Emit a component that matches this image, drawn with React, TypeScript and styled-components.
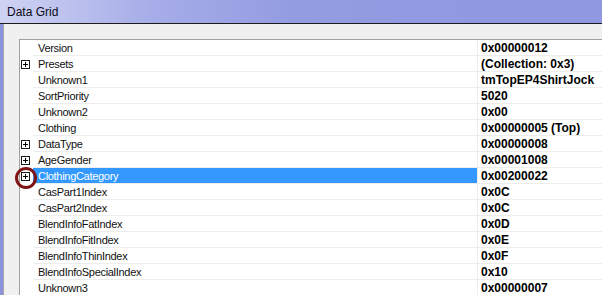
import React from 'react';
import styled, { createGlobalStyle } from 'styled-components';

const GlobalStyle = createGlobalStyle`
  html, body {
    margin: 0;
    padding: 0;
    background: #fff;
  }
  body {
    font-family: "Liberation Sans", Arial, sans-serif;
  }
`

const Window = styled.div`
  width: 602px;
  height: 295px;
  overflow: hidden;
  display: flex;
  flex-direction: column;
  background: #f0f0f0;
`

const TitleBar = styled.div`
  height: 23px;
  flex: none;
  display: flex;
  align-items: center;
  padding-left: 7px;
  font-size: 12px;
  color: #0c0c18;
  background: linear-gradient(to right, #cfd3f3 0%, #a6ade8 25%, #939be1 50%, #8f98e0 100%);
  border-bottom: 1px solid #1c1c1c;
`

const Body = styled.div`
  flex: 1;
  display: flex;
  min-height: 0;
`

const FrameEdge = styled.div`
  width: 3px;
  flex: none;
  background: #8a93dc;
`

const Panel = styled.div`
  flex: 1;
  display: flex;
  flex-direction: column;
  padding: 15px 0 0 15px;
  border-left: 1px solid #a3a3a3;
  background: #f0f0f0;
  min-height: 0;
`

const Grid = styled.div`
  flex: 1;
  background: #fff;
  border-top: 1px solid #a0a0a0;
  border-left: 1px solid #a0a0a0;
  display: flex;
  flex-direction: column;
`

const Row = styled.div`
  display: grid;
  grid-template-columns: 13px 445px 1fr;
  height: 16px;
  flex: none;
`

const Gutter = styled.div`
  position: relative;
  display: flex;
  align-items: center;
  padding-left: 1px;
`

const NameCell = styled.div<{ $selected?: boolean }>`
  display: flex;
  align-items: center;
  padding-left: 5px;
  border-bottom: 1px solid #ededed;
  border-right: 1px solid #ededed;
  background: ${p => (p.$selected ? '#3399ff' : '#fff')};
  color: ${p => (p.$selected ? '#fff' : '#111')};
  font-size: 11px;
  letter-spacing: -0.3px;
  white-space: nowrap;
`

const ValueCell = styled.div`
  display: flex;
  align-items: center;
  padding-left: 3px;
  border-bottom: 1px solid #ededed;
  color: #000;
  font-size: 12px;
  font-weight: bold;
  white-space: nowrap;
`

const Marker = styled.div`
  position: absolute;
  left: -5px;
  top: -1px;
  width: 22px;
  height: 22px;
  box-sizing: border-box;
  border: 3px solid #7e1414;
  border-radius: 50%;
`

const ExpandIcon = () => (
  <svg width="9" height="9" viewBox="0 0 9 9" style={{ display: 'block' }}>
    <rect x="0.5" y="0.5" width="8" height="8" fill="#fff" stroke="#1a1a1a" />
    <path d="M2 4.5h5M4.5 2v5" stroke="#000" strokeWidth="1" />
  </svg>
)

interface IField {
  name: string
  value: string
  expandable?: boolean
  selected?: boolean
  marked?: boolean
}

const fields: IField[] = [
  { name: 'Version', value: '0x00000012' },
  { name: 'Presets', value: '(Collection: 0x3)', expandable: true },
  { name: 'Unknown1', value: 'tmTopEP4ShirtJock' },
  { name: 'SortPriority', value: '5020' },
  { name: 'Unknown2', value: '0x00' },
  { name: 'Clothing', value: '0x00000005 (Top)' },
  { name: 'DataType', value: '0x00000008', expandable: true },
  { name: 'AgeGender', value: '0x00001008', expandable: true },
  { name: 'ClothingCategory', value: '0x00200022', expandable: true, selected: true, marked: true },
  { name: 'CasPart1Index', value: '0x0C' },
  { name: 'CasPart2Index', value: '0x0C' },
  { name: 'BlendInfoFatIndex', value: '0x0D' },
  { name: 'BlendInfoFitIndex', value: '0x0E' },
  { name: 'BlendInfoThinIndex', value: '0x0F' },
  { name: 'BlendInfoSpecialIndex', value: '0x10' },
  { name: 'Unknown3', value: '0x00000007' },
]

const App: React.FC = () => {
  return (
    <Window>
      <GlobalStyle />
      <TitleBar>Data Grid</TitleBar>
      <Body>
        <FrameEdge />
        <Panel>
          <Grid>
            {fields.map(f => (
              <Row key={f.name}>
                <Gutter>
                  {f.expandable && <ExpandIcon />}
                  {f.marked && <Marker />}
                </Gutter>
                <NameCell $selected={f.selected}>{f.name}</NameCell>
                <ValueCell>{f.value}</ValueCell>
              </Row>
            ))}
          </Grid>
        </Panel>
      </Body>
    </Window>
  );
};

export default App;
